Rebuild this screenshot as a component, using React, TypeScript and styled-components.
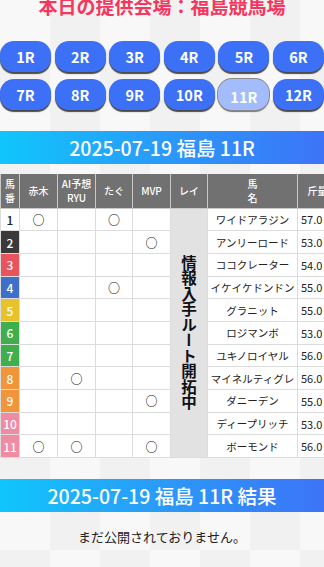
import styled, { createGlobalStyle } from 'styled-components';

const GlobalStyle = createGlobalStyle`
    html, body {
        margin: 0;
        padding: 0;
    }
    body {
        font-family: "Noto Sans CJK JP", "Noto Sans", sans-serif;
        background-color: #f8f8f8;
        background-image:
            conic-gradient(#f1f1f1 25%, transparent 0 50%, #f1f1f1 0 75%, transparent 0);
        background-size: 100px 100px;
        overflow: hidden;
    }
`;

const races = ['1R', '2R', '3R', '4R', '5R', '6R', '7R', '8R', '9R', '10R', '11R', '12R'];

const numColors: Record<number, [string, string]> = {
    1: ['#ffffff', '#222222'],
    2: ['#3a3a3a', '#ffffff'],
    3: ['#e9545c', '#ffffff'],
    4: ['#3f6fc8', '#ffffff'],
    5: ['#e8c22a', '#ffffff'],
    6: ['#3fae4c', '#ffffff'],
    7: ['#3fae4c', '#ffffff'],
    8: ['#f0953a', '#ffffff'],
    9: ['#f0953a', '#ffffff'],
    10: ['#f08ba3', '#ffffff'],
    11: ['#f08ba3', '#ffffff'],
};

// 赤木, AI予想RYU, たぐ, MVP
const horses = [
    { no: 1, name: 'ワイドアラジン', weight: '57.0', marks: [1, 0, 1, 0] },
    { no: 2, name: 'アンリーロード', weight: '53.0', marks: [0, 0, 0, 1] },
    { no: 3, name: 'ココクレーター', weight: '54.0', marks: [0, 0, 0, 0] },
    { no: 4, name: 'イケイケドンドン', weight: '55.0', marks: [0, 0, 1, 0] },
    { no: 5, name: 'グラニット', weight: '55.0', marks: [0, 0, 0, 0] },
    { no: 6, name: 'ロジマンボ', weight: '53.0', marks: [0, 0, 0, 0] },
    { no: 7, name: 'ユキノロイヤル', weight: '56.0', marks: [0, 0, 0, 0] },
    { no: 8, name: 'マイネルティグレ', weight: '56.0', marks: [0, 1, 0, 0] },
    { no: 9, name: 'ダニーデン', weight: '55.0', marks: [0, 0, 0, 1] },
    { no: 10, name: 'ディープリッチ', weight: '53.0', marks: [0, 0, 0, 0] },
    { no: 11, name: 'ボーモンド', weight: '56.0', marks: [1, 1, 0, 1] },
];

export default function App() {
    return (
        <Page>
            <GlobalStyle />
            <Title>本日の提供会場：福島競馬場</Title>
            <RaceGrid>
                {races.map((r) => (
                    <RaceButton key={r} $active={r === '11R'}>{r}</RaceButton>
                ))}
            </RaceGrid>
            <Band>2025-07-19 福島 11R</Band>
            <TableWrap>
                <Table>
                    <colgroup>
                        <col style={{ width: 19 }} />
                        <col style={{ width: 38 }} />
                        <col style={{ width: 38 }} />
                        <col style={{ width: 37 }} />
                        <col style={{ width: 38 }} />
                        <col style={{ width: 37 }} />
                        <col style={{ width: 90 }} />
                        <col style={{ width: 40 }} />
                    </colgroup>
                    <thead>
                        <HeadRow>
                            <Th>馬<br />番</Th>
                            <Th>赤木</Th>
                            <Th>AI予想<br />RYU</Th>
                            <Th>たぐ</Th>
                            <Th>MVP</Th>
                            <Th>レイ</Th>
                            <Th>馬<br />名</Th>
                            <Th>斤量</Th>
                        </HeadRow>
                    </thead>
                    <tbody>
                        {horses.map((h, i) => (
                            <BodyRow key={h.no}>
                                <NumCell $bg={numColors[h.no][0]} $fg={numColors[h.no][1]}>{h.no}</NumCell>
                                {h.marks.map((m, j) => (
                                    <MarkCell key={j}>{m ? '○' : ''}</MarkCell>
                                ))}
                                {i === 0 && (
                                    <ReiCell rowSpan={horses.length}>
                                        <VerticalText>情報入手ルート開拓中</VerticalText>
                                    </ReiCell>
                                )}
                                <NameCell>{h.name}</NameCell>
                                <WeightCell>{h.weight}</WeightCell>
                            </BodyRow>
                        ))}
                    </tbody>
                </Table>
            </TableWrap>
            <Band $gap={21}>2025-07-19 福島 11R 結果</Band>
            <Notice>まだ公開されておりません。</Notice>
        </Page>
    );
}

const Page = styled.div`
    width: 324px;
    height: 567px;
    overflow: hidden;
    display: flex;
    flex-direction: column;
`;

const Title = styled.h1`
    margin: -4px 0 0;
    font-size: 19px;
    line-height: 19px;
    font-weight: bold;
    color: #f5365f;
    text-align: center;
    letter-spacing: 0;
`;

const RaceGrid = styled.div`
    margin-top: 26px;
    display: grid;
    grid-template-columns: repeat(6, 1fr);
    column-gap: 3.5px;
    row-gap: 7px;
`;

const RaceButton = styled.div<{ $active?: boolean }>`
    height: 31px;
    border-radius: 14px;
    display: flex;
    align-items: center;
    justify-content: center;
    font-size: 14.5px;
    font-weight: bold;
    color: #ffffff;
    background: ${(props) => (props.$active ? '#a3bdfc' : '#3c70f6')};
    box-shadow: ${(props) =>
        props.$active ? '0 0 0 1px #8a8a8a, 0 2px 1px #777' : '0 2px 1px #4a4a4a'};
    padding-top: ${(props) => (props.$active ? '3px' : '0')};
    box-sizing: border-box;
`;

const Band = styled.div<{ $gap?: number }>`
    margin-top: ${(props) => props.$gap ?? 21}px;
    height: 33px;
    flex-shrink: 0;
    display: flex;
    align-items: center;
    justify-content: center;
    background: linear-gradient(90deg, #10c6fb 0%, #2a9af9 50%, #3d74f8 100%);
    color: #ffffff;
    font-size: 19.5px;
    font-weight: 500;
`;

const TableWrap = styled.div`
    margin-top: 10px;
    width: 324px;
    overflow: hidden;
    flex-shrink: 0;
`;

const Table = styled.table`
    width: 337px;
    table-layout: fixed;
    border-collapse: collapse;
    background: #ffffff;
`;

const HeadRow = styled.tr`
    height: 34px;
`;

const BodyRow = styled.tr`
    height: 22.7px;
`;

const Th = styled.th`
    padding: 0;
    background: #717171;
    color: #ffffff;
    font-size: 10px;
    font-weight: 500;
    line-height: 14px;
    border: 1px solid #c9c9c9;
    border-top: none;
    text-align: center;
    white-space: nowrap;
`;

const Td = styled.td`
    padding: 0;
    border: 1px solid #dcdcdc;
    text-align: center;
    font-size: 11px;
    color: #222222;
`;

const NumCell = styled(Td)<{ $bg: string; $fg: string }>`
    background: ${(props) => props.$bg};
    color: ${(props) => props.$fg};
    font-size: 12px;
    font-weight: 500;
`;

const MarkCell = styled(Td)`
    font-size: 12px;
    font-weight: bold;
`;

const ReiCell = styled(Td)`
    background: #e2e2e2;
    vertical-align: middle;
`;

const VerticalText = styled.div`
    margin: 0 auto;
    writing-mode: vertical-rl;
    text-orientation: upright;
    font-size: 15.5px;
    line-height: 16px;
    font-weight: bold;
    color: #111111;
`;

const NameCell = styled(Td)`
    font-size: 10.5px;
    white-space: nowrap;
`;

const WeightCell = styled(Td)`
    text-align: left;
    padding-left: 3px;
    font-size: 11px;
`;

const Notice = styled.p`
    margin: 15px 0 0;
    text-align: center;
    font-size: 13px;
    color: #222222;
`;
